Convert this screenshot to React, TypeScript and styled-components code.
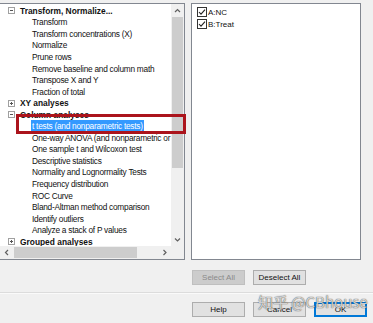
import styled, { createGlobalStyle } from "styled-components";

const GlobalStyle = createGlobalStyle`
  html, body { margin: 0; padding: 0; background: #f0f0f0; }
  body { font-family: "Liberation Sans", Arial, sans-serif; color: #000; }
`;

const Dialog = styled.div`
  position: relative;
  width: 373px;
  height: 323px;
  background: #f0f0f0;
  display: flex;
  flex-direction: column;
  overflow: hidden;
`;

const TopArea = styled.div`
  display: flex;
  gap: 6px;
  padding-top: 3px;
`;

const TreePanel = styled.div`
  width: 185px;
  height: 257px;
  box-sizing: border-box;
  border: 1px solid #828790;
  border-left: none;
  background: #fff;
  display: grid;
  grid-template-columns: 1fr 13px;
  grid-template-rows: 1fr 13px;
`;

const TreeBody = styled.div`
  overflow: hidden;
  padding-top: 1px;
`;

const Row = styled.div<{ $header?: boolean }>`
  height: 11.55px;
  display: flex;
  align-items: center;
  white-space: nowrap;
  padding-left: ${(p) => (p.$header ? "8px" : "32px")};
  gap: 5px;
  font-size: ${(p) => (p.$header ? "8.4px" : "8.3px")};
  font-weight: ${(p) => (p.$header ? 700 : 400)};
  letter-spacing: ${(p) => (p.$header ? "0" : "-0.25px")};
  color: #111;
`;

const Selected = styled.span`
  background: #3399ff;
  color: #fff;
  padding: 1.5px 1px;
  margin-left: -1px;
`;

const VScroll = styled.div`
  background: #f0f0f0;
  display: flex;
  flex-direction: column;
`;

const HScroll = styled.div`
  background: #f0f0f0;
  display: flex;
`;

const Corner = styled.div`
  background: #f0f0f0;
`;

const Arrow = styled.div`
  width: 13px;
  height: 13px;
  flex: none;
  display: flex;
  align-items: center;
  justify-content: center;
`;

const VTrack = styled.div`
  flex: 1;
  padding: 0 1px;
`;

const VThumb = styled.div`
  height: 151px;
  background: #cdcdcd;
`;

const HTrack = styled.div`
  flex: 1;
  padding: 1px 0;
  padding-left: 1px;
`;

const HThumb = styled.div`
  width: 123px;
  height: 100%;
  background: #cdcdcd;
`;

const HighlightBox = styled.div`
  position: absolute;
  left: 16px;
  top: 114px;
  width: 170px;
  height: 20px;
  box-sizing: border-box;
  border: 3px solid #ab141c;
  pointer-events: none;
`;

const CheckList = styled.div`
  width: 170px;
  height: 257px;
  box-sizing: border-box;
  border: 1px solid #828790;
  background: #fff;
  padding: 3px 5px;
  display: flex;
  flex-direction: column;
  gap: 2px;
`;

const CheckRow = styled.label`
  display: flex;
  align-items: center;
  gap: 1px;
  font-size: 8px;
  height: 10px;
  color: #111;
`;

const ButtonRow = styled.div<{ $top: number }>`
  display: flex;
  gap: 8px;
  padding-left: 192px;
  margin-top: ${(p) => p.$top}px;
`;

const Button = styled.div<{ $disabled?: boolean; $default?: boolean }>`
  width: 53px;
  height: 15px;
  box-sizing: border-box;
  display: flex;
  align-items: center;
  justify-content: center;
  font-size: 8px;
  background: ${(p) => (p.$disabled ? "#cccccc" : "#e1e1e1")};
  color: ${(p) => (p.$disabled ? "#8a8a8a" : "#111")};
  border: ${(p) =>
    p.$default ? "2px solid #0078d7" : p.$disabled ? "1px solid #bfbfbf" : "1px solid #adadad"};
`;

const Spacer = styled.div`
  height: 7px;
`;

const Separator = styled.div`
  height: 1px;
  background: #dcdcdc;
  border-bottom: 1px solid #fafafa;
`;

const Watermark = styled.div`
  position: absolute;
  left: 258px;
  top: 291px;
  font-family: "Noto Sans CJK SC", "Liberation Sans", sans-serif;
  font-size: 15px;
  color: rgba(255, 255, 255, 0.75);
  text-shadow: 0 0 1px rgba(40, 40, 40, 0.8), 0 0 1px rgba(40, 40, 40, 0.5);
  white-space: nowrap;
  pointer-events: none;
`;

function Expander({ open }: { open: boolean }) {
  return (
    <svg width="7" height="7" viewBox="0 0 7 7">
      <rect x="0.5" y="0.5" width="6" height="6" fill="#fff" stroke="#a0a0a0" />
      <line x1="2" y1="3.5" x2="5" y2="3.5" stroke="#555" />
      {!open && <line x1="3.5" y1="2" x2="3.5" y2="5" stroke="#555" />}
    </svg>
  );
}

function Chevron({ dir }: { dir: "up" | "down" | "left" | "right" }) {
  const pts = {
    up: "1,4 3.5,1.5 6,4",
    down: "1,1.5 3.5,4 6,1.5",
    left: "4,1 1.5,3.5 4,6",
    right: "1.5,1 4,3.5 1.5,6",
  }[dir];
  const vertical = dir === "up" || dir === "down";
  return (
    <svg width={vertical ? 7 : 5} height={vertical ? 5 : 7} viewBox={vertical ? "0 0 7 5" : "0 0 5 7"}>
      <polyline points={pts} fill="none" stroke="#606060" strokeWidth="1.2" />
    </svg>
  );
}

function CheckBox() {
  return (
    <svg width="10" height="10" viewBox="0 0 10 10">
      <rect x="0.5" y="0.5" width="9" height="9" fill="#fff" stroke="#333" />
      <polyline points="2,5 4,7.2 8,2.6" fill="none" stroke="#222" strokeWidth="1.1" />
    </svg>
  );
}

type Item = { label: string; header?: boolean; open?: boolean; selected?: boolean };

const items: Item[] = [
  { label: "Transform, Normalize...", header: true, open: true },
  { label: "Transform" },
  { label: "Transform concentrations (X)" },
  { label: "Normalize" },
  { label: "Prune rows" },
  { label: "Remove baseline and column math" },
  { label: "Transpose X and Y" },
  { label: "Fraction of total" },
  { label: "XY analyses", header: true, open: false },
  { label: "Column analyses", header: true, open: true },
  { label: "t tests (and nonparametric tests)", selected: true },
  { label: "One-way ANOVA (and nonparametric or mixed)" },
  { label: "One sample t and Wilcoxon test" },
  { label: "Descriptive statistics" },
  { label: "Normality and Lognormality Tests" },
  { label: "Frequency distribution" },
  { label: "ROC Curve" },
  { label: "Bland-Altman method comparison" },
  { label: "Identify outliers" },
  { label: "Analyze a stack of P values" },
  { label: "Grouped analyses", header: true, open: false },
];

export default function App() {
  return (
    <Dialog>
      <GlobalStyle />
      <TopArea>
        <TreePanel>
          <TreeBody>
            {items.map((it) => (
              <Row key={it.label} $header={it.header}>
                {it.header && <Expander open={!!it.open} />}
                {it.selected ? <Selected>{it.label}</Selected> : <span>{it.label}</span>}
              </Row>
            ))}
          </TreeBody>
          <VScroll>
            <Arrow>
              <Chevron dir="up" />
            </Arrow>
            <VTrack>
              <VThumb />
            </VTrack>
            <Arrow>
              <Chevron dir="down" />
            </Arrow>
          </VScroll>
          <HScroll>
            <Arrow>
              <Chevron dir="left" />
            </Arrow>
            <HTrack>
              <HThumb />
            </HTrack>
            <Arrow>
              <Chevron dir="right" />
            </Arrow>
          </HScroll>
          <Corner />
        </TreePanel>
        <CheckList>
          <CheckRow>
            <CheckBox />
            A:NC
          </CheckRow>
          <CheckRow>
            <CheckBox />
            B:Treat
          </CheckRow>
        </CheckList>
      </TopArea>
      <ButtonRow $top={10}>
        <Button $disabled>Select All</Button>
        <Button>Deselect All</Button>
      </ButtonRow>
      <Spacer />
      <Separator />
      <ButtonRow $top={8}>
        <Button>Help</Button>
        <Button>Cancel</Button>
        <Button $default>OK</Button>
      </ButtonRow>
      <HighlightBox />
      <Watermark>知乎 @CBhouse</Watermark>
    </Dialog>
  );
}
